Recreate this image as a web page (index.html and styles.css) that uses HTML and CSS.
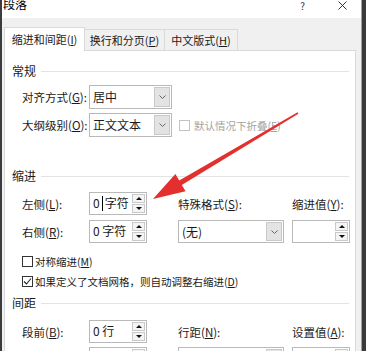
FILE: index.html
```html
<!DOCTYPE html>
<html lang="zh-CN">
<head>
    <meta charset="UTF-8">
    <title>段落</title>
    <link rel="stylesheet" href="styles.css">
</head>
<body>
<div class="screen">
    <div class="edge-left"></div>
    <div class="dialog">
        <div class="titlebar">
            <span class="title">段落</span>
            <span class="help">?</span>
            <svg class="close" width="9" height="9" viewBox="0 0 9 9">
                <path d="M0.5 0.5 L8.5 8.5 M8.5 0.5 L0.5 8.5" stroke="#333" stroke-width="1" fill="none"/>
            </svg>
        </div>
        <div class="tabs">
            <div class="tab active">缩进和间距(<u>I</u>)</div>
            <div class="tab">换行和分页(<u>P</u>)</div>
            <div class="tab last">中文版式(<u>H</u>)</div>
        </div>
        <div class="panel">
            <div class="group">常规</div>
            <div class="row first">
                <span class="label">对齐方式(<u>G</u>):</span>
                <div class="select w83">
                    <span class="value">居中</span>
                    <span class="drop"><svg width="7" height="4" viewBox="0 0 7 4"><path d="M0.5 0.5 L3.5 3.5 L6.5 0.5" stroke="#666" fill="none"/></svg></span>
                </div>
            </div>
            <div class="row">
                <span class="label">大纲级别(<u>O</u>):</span>
                <div class="select w83">
                    <span class="value">正文文本</span>
                    <span class="drop"><svg width="7" height="4" viewBox="0 0 7 4"><path d="M0.5 0.5 L3.5 3.5 L6.5 0.5" stroke="#666" fill="none"/></svg></span>
                </div>
                <span class="box disabled"></span>
                <span class="check-text disabled">默认情况下折叠(<u>E</u>)</span>
            </div>

            <div class="group indent">缩进</div>
            <div class="grid">
                <span class="label">左侧(<u>L</u>):</span>
                <div class="spin">
                    <span class="value">0<i class="caret"></i>字符</span>
                    <span class="btns"><span class="up"></span><span class="down"></span></span>
                </div>
                <span class="label">特殊格式(<u>S</u>):</span>
                <span class="label">缩进值(<u>Y</u>):</span>

                <span class="label">右侧(<u>R</u>):</span>
                <div class="spin">
                    <span class="value">0 字符</span>
                    <span class="btns"><span class="up"></span><span class="down"></span></span>
                </div>
                <div class="select w106">
                    <span class="value">(无)</span>
                    <span class="drop"><svg width="7" height="4" viewBox="0 0 7 4"><path d="M0.5 0.5 L3.5 3.5 L6.5 0.5" stroke="#666" fill="none"/></svg></span>
                </div>
                <div class="spin">
                    <span class="value"></span>
                    <span class="btns"><span class="up"></span><span class="down"></span></span>
                </div>
            </div>
            <div class="checks">
                <div class="check-row">
                    <span class="box"></span>
                    <span class="check-text">对称缩进(<u>M</u>)</span>
                </div>
                <div class="check-row">
                    <span class="box"><svg width="9" height="9" viewBox="0 0 9 9"><path d="M1 4.5 L3.5 7 L8 1.5" stroke="#222" stroke-width="1.1" fill="none"/></svg></span>
                    <span class="check-text">如果定义了文档网格，则自动调整右缩进(<u>D</u>)</span>
                </div>
            </div>

            <div class="group spacing">间距</div>
            <div class="grid spacing-grid">
                <span class="label">段前(<u>B</u>):</span>
                <div class="spin">
                    <span class="value">0 行</span>
                    <span class="btns"><span class="up"></span><span class="down"></span></span>
                </div>
                <span class="label">行距(<u>N</u>):</span>
                <span class="label">设置值(<u>A</u>):</span>

                <span class="label">段后(<u>F</u>):</span>
                <div class="spin">
                    <span class="value">0 行</span>
                    <span class="btns"><span class="up"></span><span class="down"></span></span>
                </div>
                <div class="select w106">
                    <span class="value">单倍行距</span>
                    <span class="drop"><svg width="7" height="4" viewBox="0 0 7 4"><path d="M0.5 0.5 L3.5 3.5 L6.5 0.5" stroke="#666" fill="none"/></svg></span>
                </div>
                <div class="spin">
                    <span class="value"></span>
                    <span class="btns"><span class="up"></span><span class="down"></span></span>
                </div>
            </div>
        </div>
    </div>
    <div class="edge-right"></div>
</div>

<!-- 标注箭头 -->
<svg class="arrow" width="366" height="351" viewBox="0 0 366 351">
    <polygon points="297.6,112.3 179.2,180.5 175.4,174.1 153,199 185.6,191.3 181.8,184.9 298.4,113.7" fill="#e3302f"/>
</svg>
</body>
</html>
```

FILE: styles.css
```css
* {
    margin: 0;
    padding: 0;
    box-sizing: border-box;
}

html, body {
    width: 366px;
    height: 351px;
    overflow: hidden;
}

body {
    position: relative;
    background: #3a3a3a;
    font-family: "Noto Sans CJK SC", sans-serif;
    font-size: 12px;
    color: #1a1a1a;
}

u {
    text-decoration: underline;
    text-underline-offset: 1px;
}

.screen {
    display: flex;
    height: 351px;
}

.edge-left {
    width: 2px;
    background: #3c3c3c;
}

.edge-right {
    width: 5px;
    border-left: 1px solid #5db7e8;
    background: #3a3a3a;
}

.dialog {
    width: 359px;
    display: flex;
    flex-direction: column;
    background: #f0f0f0;
}

.titlebar {
    height: 18px;
    flex: none;
    display: flex;
    align-items: flex-start;
    padding-left: 1px;
    background: #ffffff;
}

.title {
    line-height: 12px;
    margin-top: -2px;
    color: #000;
}

.help {
    margin-left: auto;
    font-size: 10px;
    line-height: 12px;
    color: #333;
}

.close {
    margin: 1px 14px 0 33px;
}

.tabs {
    height: 32px;
    flex: none;
    display: flex;
    align-items: flex-end;
    padding: 0 0 0 2px;
}

.tab {
    width: 81px;
    height: 21px;
    margin-left: -1px;
    border: 1px solid #d9d9d9;
    border-bottom: none;
    background: #f0f0f0;
    font-size: 11px;
    line-height: 20px;
    text-align: center;
}

.tab.active {
    position: relative;
    z-index: 1;
    height: 24px;
    margin-left: 0;
    margin-bottom: -1px;
    background: #ffffff;
    line-height: 22px;
}

.tab.last {
    width: 74px;
}

.panel {
    flex: 1;
    margin: 0 5px 0 2px;
    padding: 0 6px 0 7px;
    border: 1px solid #d9d9d9;
    background: #ffffff;
}

.group {
    display: flex;
    align-items: center;
    line-height: 12px;
    margin-top: 14px;
}

.group::after {
    content: "";
    flex: 1;
    height: 1px;
    margin-left: 5px;
    background: #e3e3e3;
}

.group.indent {
    margin-top: 33px;
}

.group.spacing {
    margin-top: 6px;
}

.row {
    display: flex;
    align-items: center;
    margin-top: 4px;
    padding-left: 10px;
}

.row.first {
    margin-top: 8px;
}

.label {
    width: 67px;
    font-size: 11.5px;
    white-space: nowrap;
}

.select {
    height: 24px;
    display: flex;
    border: 1px solid #b9b9b9;
    background: #ffffff;
}

.w83 {
    width: 83px;
}

.w106 {
    width: 106px;
}

.select .value {
    flex: 1;
    padding-left: 3px;
    line-height: 21px;
    white-space: nowrap;
}

.select .drop {
    width: 16px;
    margin: 1px;
    display: flex;
    align-items: center;
    justify-content: center;
    border: 1px solid #c9c9c9;
    background: #e3e3e3;
}

.grid {
    display: grid;
    grid-template-columns: 67px 89px 114px 58px;
    grid-auto-rows: 23px;
    row-gap: 5px;
    align-items: center;
    margin-top: 10px;
    padding-left: 10px;
}

.grid .select {
    height: 23px;
}

.spacing-grid {
    margin-top: 11px;
    row-gap: 4px;
}

.spin {
    width: 58px;
    height: 23px;
    display: flex;
    border: 1px solid #b9b9b9;
    background: #ffffff;
}

.spin .value {
    flex: 1;
    padding-left: 3px;
    line-height: 20px;
    white-space: nowrap;
}

.caret {
    display: inline-block;
    width: 1px;
    height: 15px;
    margin: 0 2px 0 2px;
    vertical-align: -3px;
    background: #000;
}

.spin .btns {
    width: 13px;
    margin: 1px 1px 1px 0;
    display: flex;
    flex-direction: column;
    gap: 1px;
}

.btns span {
    flex: 1;
    display: flex;
    align-items: center;
    justify-content: center;
    border: 1px solid #c9c9c9;
    background: #f4f4f4;
}

.up::before {
    content: "";
    border-left: 3px solid transparent;
    border-right: 3px solid transparent;
    border-bottom: 3px solid #111;
}

.down::before {
    content: "";
    border-left: 3px solid transparent;
    border-right: 3px solid transparent;
    border-top: 3px solid #111;
}

.box {
    width: 11px;
    height: 11px;
    flex: none;
    display: flex;
    align-items: center;
    justify-content: center;
    border: 1px solid #333;
    background: #ffffff;
}

.box.disabled {
    margin-left: 7px;
    border-color: #c2c2c2;
}

.check-text {
    margin-left: 2px;
    font-size: 10.5px;
    white-space: nowrap;
}

.check-text.disabled {
    margin-left: 4px;
    color: #a3a3a3;
}

.checks {
    margin-top: 8px;
    padding-left: 10px;
}

.check-row {
    height: 20px;
    display: flex;
    align-items: center;
}

.arrow {
    position: absolute;
    left: 0;
    top: 0;
    pointer-events: none;
}
```
